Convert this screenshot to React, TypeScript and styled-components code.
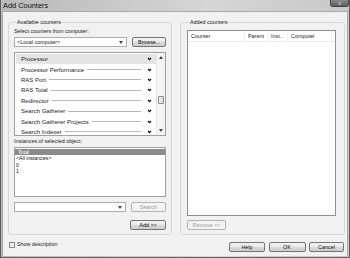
import styled, { createGlobalStyle } from 'styled-components';

const GlobalStyle = createGlobalStyle`
  * { box-sizing: border-box; }
  body {
    margin: 0;
    font-family: "Liberation Sans", Arial, sans-serif;
    color: #1a1a1a;
  }
`;

const counters = [
  'Processor',
  'Processor Performance',
  'RAS Port',
  'RAS Total',
  'Redirector',
  'Search Gatherer',
  'Search Gatherer Projects',
  'Search Indexer',
];

const instances = ['Total', '<All instances>', '0', '1'];

const Chevron = () => (
  <svg width="5" height="4" viewBox="0 0 5 4">
    <path d="M1 1 L2.5 2.6 L4 1" fill="none" stroke="#111" strokeWidth="1.2" />
  </svg>
);

const Arrow = ({ up }: { up?: boolean }) => (
  <svg width="4" height="3" viewBox="0 0 4 3">
    <path d={up ? 'M0 3 L2 0 L4 3 Z' : 'M0 0 L2 3 L4 0 Z'} fill="#444" />
  </svg>
);

const App = () => {
  return (
    <>
      <GlobalStyle />
      <Window>
        <TitleBar>
          <Title>Add Counters</Title>
          <CloseBtn>x</CloseBtn>
        </TitleBar>
        <Client>
          <Columns>
            <Group $width={164} $pad="3px 5px 4px">
              <Legend>Available counters</Legend>
              <Label>Select counters from computer:</Label>
              <Row $top={2}>
                <Combo $width={114}>
                  <span>&lt;Local computer&gt;</span>
                  <Arrow />
                </Combo>
                <Button $width={34}>Browse...</Button>
              </Row>
              <CounterList>
                <Rows>
                  {counters.map((name, i) => (
                    <CounterRow key={name} $selected={i === 0}>
                      <span>{name}</span>
                      {i !== 0 && <Rule />}
                      <Chevron />
                    </CounterRow>
                  ))}
                </Rows>
                <ScrollBar>
                  <ArrowBox>
                    <Arrow up />
                  </ArrowBox>
                  <Track>
                    <Thumb $offset={34} />
                  </Track>
                  <ArrowBox>
                    <Arrow />
                  </ArrowBox>
                </ScrollBar>
              </CounterList>
              <Label $top={2}>Instances of selected object:</Label>
              <InstanceList>
                {instances.map((name, i) => (
                  <InstanceRow key={name} $selected={i === 0}>
                    {name}
                  </InstanceRow>
                ))}
              </InstanceList>
              <Row $top={5}>
                <Combo $width={114}>
                  <span />
                  <Arrow />
                </Combo>
                <Button $width={36} disabled>
                  Search
                </Button>
              </Row>
              <Row $top={8} $end>
                <Button $width={36}>Add &gt;&gt;</Button>
              </Row>
            </Group>
            <Group $width={165} $pad="5px 8px 4px 6px">
              <Legend>Added counters</Legend>
              <AddedList>
                <Header>
                  <HeaderCell $width={57}>Counter</HeaderCell>
                  <HeaderCell $width={23}>Parent</HeaderCell>
                  <HeaderCell $width={20}>Inst...</HeaderCell>
                  <HeaderCell $width={44}>Computer</HeaderCell>
                </Header>
              </AddedList>
              <Row $top={4}>
                <Button $width={39} disabled>
                  Remove &lt;&lt;
                </Button>
              </Row>
            </Group>
          </Columns>
          <Footer>
            <CheckLabel>
              <CheckBox />
              Show description
            </CheckLabel>
            <Buttons>
              <Button $width={36}>Help</Button>
              <Button $width={37}>OK</Button>
              <Button $width={35}>Cancel</Button>
            </Buttons>
          </Footer>
        </Client>
      </Window>
    </>
  );
};

export default App;

const Window = styled.div`
  width: 350px;
  height: 258px;
  display: flex;
  flex-direction: column;
  background: linear-gradient(90deg, #b9b9b9, #d6d6d6 60%, #c8c8c8);
  border: 1px solid #5e5e5e;
  border-top: none;
`;

const TitleBar = styled.div`
  height: 11px;
  display: flex;
  align-items: flex-start;
  justify-content: space-between;
  padding-left: 2px;
`;

const Title = styled.div`
  font-size: 7.4px;
  line-height: 11px;
  color: #111;
`;

const CloseBtn = styled.div`
  width: 19px;
  height: 7px;
  border-radius: 0 0 3px 3px;
  background: linear-gradient(#8a8a8a, #5c5c5c);
  border: 1px solid #444;
  border-top: none;
  color: #eee;
  font-size: 5px;
  line-height: 6px;
  text-align: center;
`;

const Client = styled.div`
  flex: 1;
  margin: 0 1px 1px;
  padding: 7px 2px 0 5px;
  background: #f1f1f1;
  border: 1px solid #a9a9a9;
  border-bottom: none;
  display: flex;
  flex-direction: column;
`;

const Columns = styled.div`
  display: flex;
  gap: 8px;
`;

const Group = styled.fieldset<{ $width: number; $pad: string }>`
  width: ${({ $width }) => $width}px;
  height: 216px;
  margin: 0;
  padding: ${({ $pad }) => $pad};
  border: 1px solid #d8d8d8;
  border-radius: 3px;
  display: flex;
  flex-direction: column;
  min-width: 0;
`;

const Legend = styled.legend`
  font-size: 5.4px;
  line-height: 6px;
  padding: 0 1px;
  margin-left: 2px;
`;

const Label = styled.div<{ $top?: number }>`
  font-size: 5.4px;
  line-height: 7px;
  margin-top: ${({ $top }) => $top ?? 0}px;
`;

const Row = styled.div<{ $top: number; $end?: boolean }>`
  display: flex;
  gap: 5px;
  justify-content: ${({ $end }) => ($end ? 'flex-end' : 'space-between')};
  margin-top: ${({ $top }) => $top}px;
`;

const Combo = styled.div<{ $width: number }>`
  width: ${({ $width }) => $width}px;
  height: 10px;
  background: #fff;
  border: 1px solid #adadad;
  padding: 0 3px 0 2px;
  display: flex;
  align-items: center;
  justify-content: space-between;
  font-size: 5.4px;
`;

const Button = styled.button<{ $width: number }>`
  width: ${({ $width }) => $width}px;
  height: 10px;
  padding: 0;
  font-family: inherit;
  font-size: 5.4px;
  color: #111;
  border: 1px solid #747474;
  border-radius: 2px;
  background: linear-gradient(#f4f4f4 0%, #e9e9e9 48%, #d9d9d9 52%, #cdcdcd 100%);

  &:disabled {
    color: #a0a0a0;
    border-color: #b4b4b4;
    background: #f3f3f3;
  }
`;

const CounterList = styled.div`
  height: 84px;
  margin-top: 5px;
  background: #fff;
  border: 1px solid #9f9f9f;
  display: flex;
`;

const Rows = styled.div`
  flex: 1;
  padding: 1px 0 0 1px;
`;

const CounterRow = styled.div<{ $selected: boolean }>`
  height: 10.4px;
  display: flex;
  align-items: center;
  padding: 0 4px 0 5px;
  font-size: 6px;
  color: #1c1c1c;
  background: ${({ $selected }) => ($selected ? '#e4e4e4' : 'transparent')};

  span {
    white-space: nowrap;
    margin-right: auto;
  }
`;

const Rule = styled.div`
  flex: 1;
  height: 1px;
  margin: 0 6px 0 3px;
  background: #b8b8b8;
`;

const ScrollBar = styled.div`
  width: 9px;
  display: flex;
  flex-direction: column;
  background: #f4f4f4;
  border-left: 1px solid #e6e6e6;
`;

const ArrowBox = styled.div`
  height: 9px;
  display: flex;
  align-items: center;
  justify-content: center;
`;

const Track = styled.div`
  flex: 1;
`;

const Thumb = styled.div<{ $offset: number }>`
  width: 6px;
  height: 8px;
  margin: ${({ $offset }) => $offset}px auto 0;
  border: 1px solid #8c8c8c;
  border-radius: 1px;
  background: linear-gradient(90deg, #f2f2f2, #dcdcdc);
`;

const InstanceList = styled.div`
  height: 50px;
  margin-top: 2px;
  background: #fff;
  border: 1px solid #9f9f9f;
  padding: 1px 0 0 0;
`;

const InstanceRow = styled.div<{ $selected: boolean }>`
  height: 6.4px;
  line-height: 6.4px;
  font-size: 5.2px;
  padding-left: ${({ $selected }) => ($selected ? 3 : 1)}px;
  color: ${({ $selected }) => ($selected ? '#fff' : '#111')};
  background: ${({ $selected }) => ($selected ? '#8a8a8a' : 'transparent')};
`;

const AddedList = styled.div`
  height: 188px;
  background: #fff;
  border: 1px solid #8f8f8f;
`;

const Header = styled.div`
  height: 11px;
  display: flex;
  border-bottom: 1px solid #ececec;
`;

const HeaderCell = styled.div<{ $width: number }>`
  width: ${({ $width }) => $width}px;
  padding-left: 3px;
  font-size: 5.4px;
  line-height: 11px;
  white-space: nowrap;
  border-right: 1px solid #f0f0f0;
`;

const Footer = styled.div`
  display: flex;
  justify-content: space-between;
  align-items: flex-start;
  padding: 6px 1px 0 1px;
`;

const CheckLabel = styled.label`
  display: flex;
  align-items: center;
  gap: 2px;
  font-size: 5.3px;
  line-height: 7px;
`;

const CheckBox = styled.span`
  width: 6px;
  height: 6px;
  border: 1px solid #8a8a8a;
  background: linear-gradient(135deg, #dcdcdc, #fafafa);
`;

const Buttons = styled.div`
  display: flex;
  gap: 3.5px;
  margin-top: 1px;
`;
